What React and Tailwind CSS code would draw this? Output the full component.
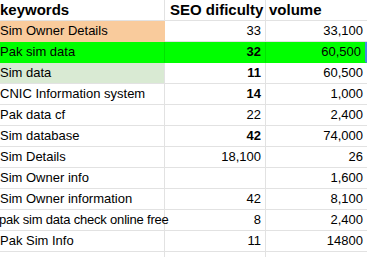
import React from "react";

const rows = [
  { k: "Sim Owner Details", s: "33", v: "33,100", bg: "orange" },
  { k: "Pak sim data", s: "32", v: "60,500", bg: "green", sb: true },
  { k: "Sim data", s: "11", v: "60,500", bg: "lightgreen", sb: true },
  { k: "CNIC Information system", s: "14", v: "1,000", sb: true },
  { k: "Pak data cf", s: "22", v: "2,400" },
  { k: "Sim database", s: "42", v: "74,000", sb: true },
  { k: "Sim Details", s: "18,100", v: "26" },
  { k: "Sim Owner info", s: "", v: "1,600" },
  { k: "Sim Owner information", s: "42", v: "8,100" },
  { k: "pak sim data check online free", s: "8", v: "2,400", pk: true },
  { k: "Pak Sim Info", s: "11", v: "14800" },
  { k: "", s: "", v: "" },
];

export default function App() {
  return (
    <div
      className="w-[367px] h-[257px] overflow-hidden bg-white text-black"
      style={{ fontFamily: '"Liberation Sans", Arial, sans-serif' }}
    >
      <div className="ml-[-3px] grid grid-cols-[168px_101px_1fr]">
        <div className="h-[21px] border-b border-r border-[#e2e2e2] pl-[3px] text-[15px] font-bold leading-[20px] whitespace-nowrap">
          keywords
        </div>
        <div className="h-[21px] border-b border-r border-[#e2e2e2] pl-[5px] text-[15px] font-bold leading-[20px] whitespace-nowrap">
          SEO dificulty
        </div>
        <div className="h-[21px] border-b border-[#e2e2e2] pl-[3px] text-[15px] font-bold leading-[20px] whitespace-nowrap">
          volume
        </div>
        {rows.map((r, i) => {
          const green = r.bg === "green";
          const c1 =
            r.bg === "orange"
              ? "bg-[#f9cb9c] border-[#f9cb9c]"
              : green
              ? "bg-[#00ff00] border-r-[#00e400] border-b-[#00ff00]"
              : r.bg === "lightgreen"
              ? "bg-[#d9ead3] border-[#e2e2e2]"
              : "border-[#e2e2e2]";
          const c2 = green
            ? "bg-[#00ff00] border-r-[#00e400] border-b-[#00ff00]"
            : "border-[#e2e2e2]";
          const c3 = green
            ? "bg-[#00ff00] border-b-[#00ff00] border-r-2 border-r-[#4a86e8]"
            : "border-[#e2e2e2]";
          return (
            <React.Fragment key={i}>
              <div
                className={`h-[21px] border-b border-r ${c1} ${
                  r.pk ? "pl-[2px] tracking-[-0.2px]" : "pl-[3px]"
                } text-[13px] leading-[20px] whitespace-nowrap`}
              >
                {r.k}
              </div>
              <div
                className={`h-[21px] border-b border-r ${c2} pr-[4px] text-right text-[13px] leading-[20px] whitespace-nowrap ${
                  r.sb ? "font-bold" : ""
                }`}
              >
                {r.s}
              </div>
              <div
                className={`h-[21px] border-b ${c3} pr-[4px] text-right text-[13px] leading-[20px] whitespace-nowrap`}
              >
                {r.v}
              </div>
            </React.Fragment>
          );
        })}
      </div>
    </div>
  );
}
